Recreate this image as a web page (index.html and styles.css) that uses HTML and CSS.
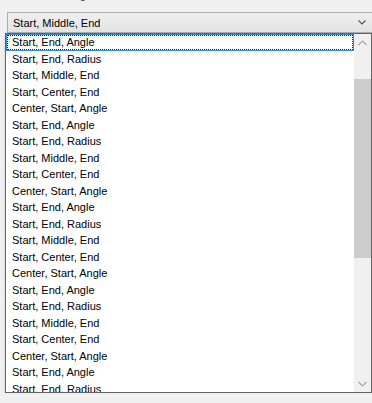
FILE: index.html
```html
<!DOCTYPE html>
<html lang="en">
  <head>
    <meta charset="UTF-8" />
    <title>Arc mode</title>
    <link rel="stylesheet" href="styles.css">
  </head>
  <body>
    <div class="group-label"><span>Arc drawing</span></div>

    <div class="combo">
      <span class="combo-text">Start, Middle, End</span>
      <svg class="chevron" width="8" height="5" viewBox="0 0 8 5"><path d="M0.5 0.5 L4 4 L7.5 0.5" fill="none" stroke="#555" stroke-width="1.2"/></svg>
    </div>

    <div class="dropdown">
      <ul class="list">
        <li class="item focused"><span>Start, End, Angle</span></li>
        <li class="item">Start, End, Radius</li>
        <li class="item">Start, Middle, End</li>
        <li class="item">Start, Center, End</li>
        <li class="item">Center, Start, Angle</li>
        <li class="item">Start, End, Angle</li>
        <li class="item">Start, End, Radius</li>
        <li class="item">Start, Middle, End</li>
        <li class="item">Start, Center, End</li>
        <li class="item">Center, Start, Angle</li>
        <li class="item">Start, End, Angle</li>
        <li class="item">Start, End, Radius</li>
        <li class="item">Start, Middle, End</li>
        <li class="item">Start, Center, End</li>
        <li class="item">Center, Start, Angle</li>
        <li class="item">Start, End, Angle</li>
        <li class="item">Start, End, Radius</li>
        <li class="item">Start, Middle, End</li>
        <li class="item">Start, Center, End</li>
        <li class="item">Center, Start, Angle</li>
        <li class="item">Start, End, Angle</li>
        <li class="item">Start, End, Radius</li>
        <li class="item">Start, Middle, End</li>
      </ul>
      <div class="scrollbar">
        <div class="arrow">
          <svg width="9" height="6" viewBox="0 0 9 6"><path d="M0.5 5 L4.5 1 L8.5 5" fill="none" stroke="#a6a6a6" stroke-width="1.2"/></svg>
        </div>
        <div class="track">
          <div class="thumb"></div>
        </div>
        <div class="arrow">
          <svg width="9" height="6" viewBox="0 0 9 6"><path d="M0.5 1 L4.5 5 L8.5 1" fill="none" stroke="#a6a6a6" stroke-width="1.2"/></svg>
        </div>
      </div>
    </div>
  </body>
</html>
```

FILE: styles.css
```css
/* Reset default margin and padding */
body,
ul,
li {
  margin: 0;
  padding: 0;
}

body {
  font-family: "Liberation Sans", Arial, sans-serif;
  font-size: 11px;
  color: #000;
  background-color: #f0f0f0;
  overflow: hidden;
}

/* label of the group, mostly scrolled off the top */
.group-label {
  height: 12px;
  overflow: hidden;
  padding-left: 28px;
  color: #333;
}

.group-label span {
  display: block;
  margin-top: -11px;
  line-height: 13px;
}

/* closed combo box */
.combo {
  display: flex;
  align-items: center;
  height: 19px;
  margin-left: 7px;
  border: 1px solid #adadad;
  border-right: none;
  background: linear-gradient(#efefef, #e3e3e3);
}

.combo-text {
  flex: 1;
  padding-left: 5px;
  padding-top: 1px;
}

.chevron {
  margin-right: 6px;
}

/* open drop down list */
.dropdown {
  display: flex;
  height: 358px;
  margin-left: 5px;
  border: 1px solid #646464;
  background-color: #ffffff;
  box-shadow: 1px 2px 3px rgba(0, 0, 0, 0.35);
}

.list {
  flex: 1;
  list-style: none;
  overflow: hidden;
}

.item {
  height: 16.5px;
  line-height: 16px;
  padding-left: 6px;
  white-space: nowrap;
}

.item.focused {
  padding: 0;
  border: 1px solid #2f8ed6;
  height: 14.5px;
}

.item.focused span {
  display: block;
  height: 12.5px;
  line-height: 13px;
  padding-left: 4px;
  outline: 1px dotted #222;
  outline-offset: 0;
  margin: 1px 1px 0 1px;
}

.scrollbar {
  display: flex;
  flex-direction: column;
  width: 17px;
  background-color: #f0f0f0;
}

.arrow {
  display: flex;
  align-items: center;
  justify-content: center;
  height: 17px;
}

.track {
  flex: 1;
  padding-top: 28px;
}

.thumb {
  height: 179px;
  background-color: #cdcdcd;
}
```
